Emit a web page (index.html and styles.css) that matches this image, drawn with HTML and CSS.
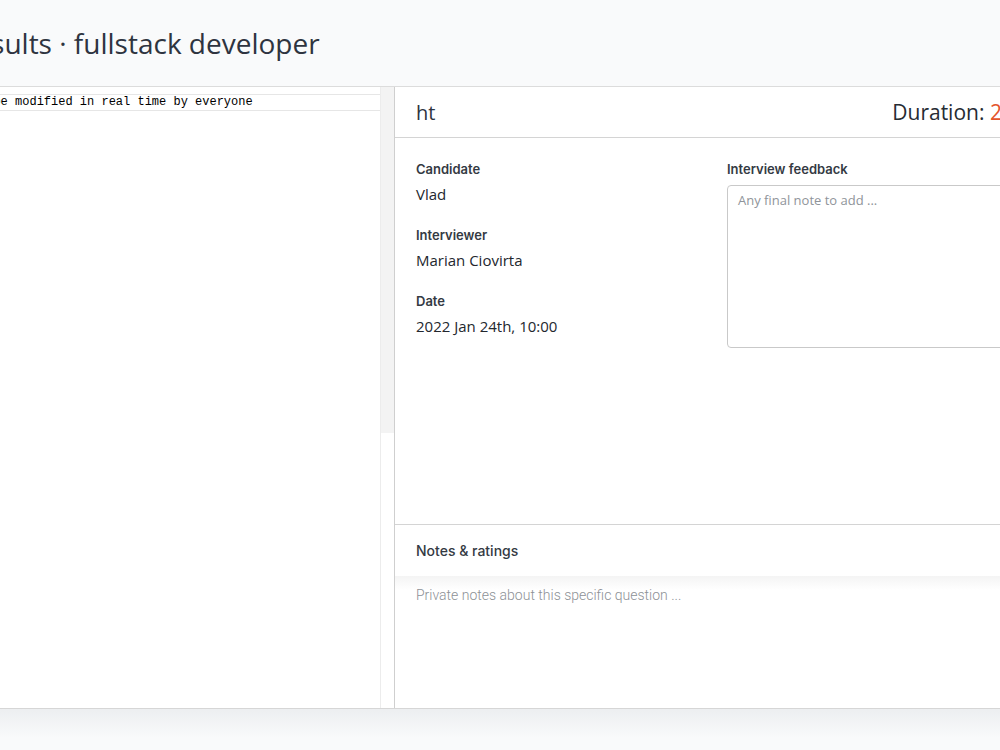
FILE: index.html
```html
<!DOCTYPE html>
<html lang="en">
<head>
    <meta charset="UTF-8">
    <meta name="viewport" content="width=device-width, initial-scale=1.0">
    <title>Interview results · fullstack developer</title>
    <link rel="stylesheet" href="styles.css">
</head>
<body>
    <div class="page">
        <header class="page-header">
            <h1 class="page-title">Interview results · fullstack developer</h1>
        </header>

        <main class="workspace">
            <section class="editor">
                <div class="code">
                    <div class="code-line active">// This code can be modified in real time by everyone</div>
                </div>
                <div class="scrollbar">
                    <div class="scroll-thumb"></div>
                </div>
            </section>

            <section class="panel">
                <div class="panel-head">
                    <h2 class="panel-title">ht</h2>
                    <div class="duration">Duration: <span class="duration-value">25 min</span></div>
                </div>

                <div class="summary">
                    <div class="facts">
                        <div class="fact">
                            <div class="label">Candidate</div>
                            <div class="value">Vlad</div>
                        </div>
                        <div class="fact">
                            <div class="label">Interviewer</div>
                            <div class="value">Marian Ciovirta</div>
                        </div>
                        <div class="fact">
                            <div class="label">Date</div>
                            <div class="value">2022 Jan 24th, 10:00</div>
                        </div>
                    </div>
                    <div class="feedback">
                        <label class="label" for="feedback">Interview feedback</label>
                        <textarea id="feedback" class="feedback-input" placeholder="Any final note to add ..."></textarea>
                    </div>
                </div>

                <div class="notes">
                    <div class="notes-head">Notes &amp; ratings</div>
                    <textarea class="notes-input" placeholder="Private notes about this specific question ..."></textarea>
                </div>
            </section>
        </main>
    </div>
</body>
</html>
```

FILE: styles.css
```css
html, body {
    margin: 0;
    height: 100%;
    overflow: hidden;
}

body {
    background: linear-gradient(#eceef0, #f9fafb 30px) bottom / 100% 42px no-repeat, #f9fafb;
    font-family: "Open Sans", sans-serif;
    color: #2e3440;
}

.page {
    width: 1700px;
    margin-left: -300px;
}

.page-header {
    height: 86px;
    display: flex;
    align-items: center;
    padding-left: 136px;
    background: #f9fafb;
}

.page-title {
    margin: 0;
    font-size: 28px;
    font-weight: 500;
    color: #2e3440;
}

.workspace {
    display: flex;
    height: 621px;
    background: #fff;
    border-top: 1px solid #dcdcdc;
    border-bottom: 1px solid #d6d6d6;
}

.editor {
    width: 694px;
    display: flex;
    flex-shrink: 0;
}

.code {
    flex: 1;
    padding-top: 7px;
    font-family: "Liberation Mono", monospace;
    font-size: 12px;
    color: #000;
}

.code-line {
    height: 15px;
    line-height: 15px;
    padding-left: 171px;
    white-space: pre;
}

.code-line.active {
    border-top: 1px solid #e6e6e6;
    border-bottom: 1px solid #e6e6e6;
    margin-right: -12px;
}

.scrollbar {
    width: 13px;
    border-left: 1px solid #ececec;
}

.scroll-thumb {
    height: 346px;
    background: #f3f3f3;
}

.panel {
    width: 683px;
    flex-shrink: 0;
    border-left: 1px solid #cfcfcf;
    display: flex;
    flex-direction: column;
}

.panel-head {
    height: 50px;
    display: flex;
    align-items: center;
    justify-content: space-between;
    padding: 0 21px;
    border-bottom: 1px solid #d4d4d4;
}

.panel-title {
    margin: 0;
    font-size: 20px;
    font-weight: 500;
}

.duration {
    font-size: 21px;
    font-weight: 500;
    color: #262b33;
}

.duration-value {
    color: #e4542b;
}

.summary {
    flex: 1;
    display: grid;
    grid-template-columns: 291px 1fr;
    gap: 20px;
    padding: 21px 21px 0;
    border-bottom: 1px solid #d4d4d4;
}

.fact {
    margin-bottom: 20px;
}

.label {
    display: block;
    font-family: Inter, sans-serif;
    font-size: 13px;
    font-weight: 600;
    line-height: 20px;
    color: #343a43;
}

.value {
    margin-top: 5px;
    font-size: 15px;
    line-height: 21px;
    color: #23272e;
}

.feedback-input {
    display: block;
    box-sizing: border-box;
    width: 100%;
    height: 163px;
    margin-top: 6px;
    padding: 5px 10px;
    border: 1px solid #c9c9c9;
    border-radius: 4px;
    resize: none;
    font-family: "Open Sans", sans-serif;
    font-size: 13px;
}

.feedback-input::placeholder {
    color: #8f949a;
}

.notes {
    height: 183px;
    display: flex;
    flex-direction: column;
}

.notes-head {
    height: 51px;
    display: flex;
    align-items: center;
    padding-left: 21px;
    font-family: Inter, sans-serif;
    font-size: 14px;
    font-weight: 500;
    color: #343a43;
}

.notes-input {
    flex: 1;
    border: 0;
    padding: 11px 21px;
    resize: none;
    background: linear-gradient(#f4f4f4, #fff 14px);
    font-family: Roboto, sans-serif;
    font-size: 14px;
    font-weight: 300;
    color: #333;
}

.notes-input::placeholder {
    color: #8d9196;
}
```
